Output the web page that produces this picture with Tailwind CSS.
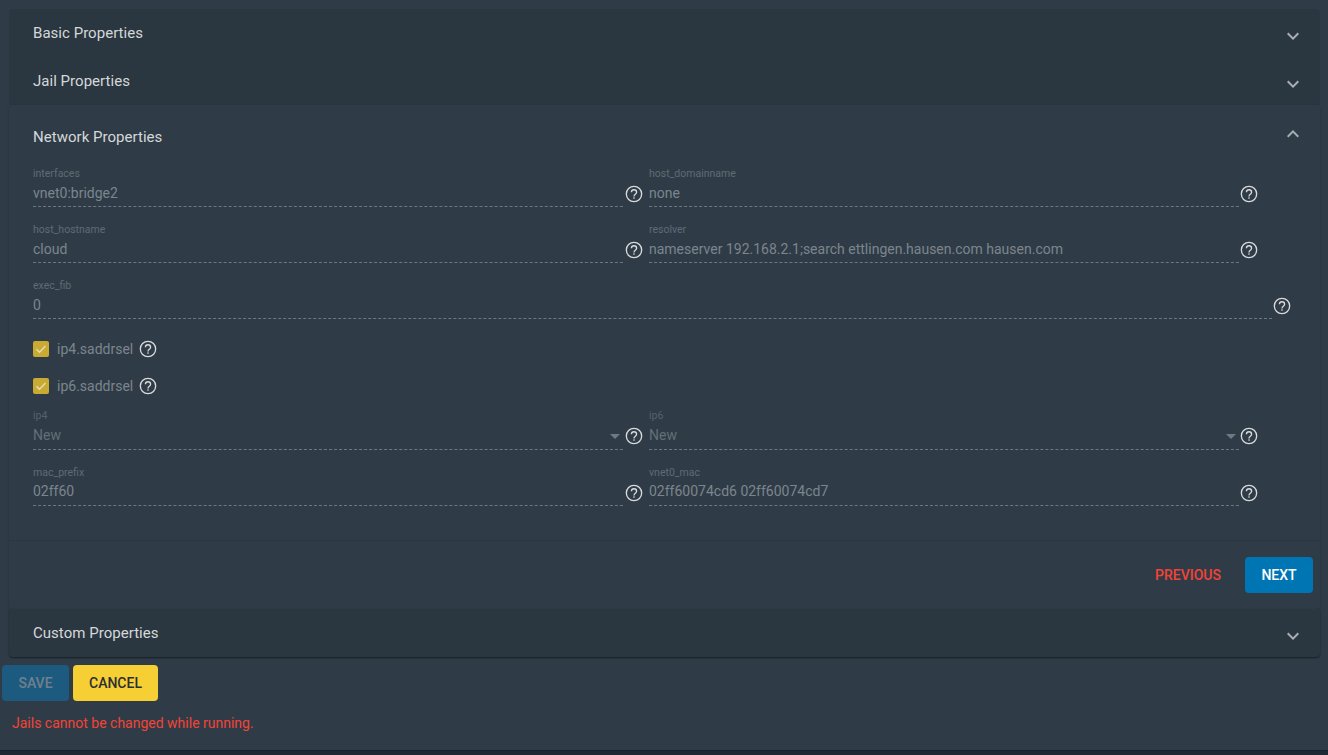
<!DOCTYPE html>
<html lang="en">
<head>
    <meta charset="utf8" />
    <script src="https://cdn.jsdelivr.net/npm/@tailwindcss/browser@4"></script>
    <title>Jail Properties</title>
</head>
<body class="bg-[#2f3c47] font-[Roboto,sans-serif] h-[755px] overflow-hidden relative">
    <svg class="hidden">
        <symbol id="help" viewBox="0 0 24 24">
            <circle cx="12" cy="12" r="9.2" fill="none" stroke="#d8dadc" stroke-width="1.6" />
            <path d="M8.9 10a3.1 3.1 0 0 1 6.2 0c0 2.4-3.1 2.3-3.1 5" fill="none" stroke="#d8dadc" stroke-width="1.6" />
            <rect x="11.2" y="16" width="1.6" height="1.7" fill="#d8dadc" />
        </symbol>
        <symbol id="down" viewBox="0 0 24 24"><path d="M16.59 8.59L12 13.17 7.41 8.59 6 10l6 6 6-6z"/></symbol>
        <symbol id="up" viewBox="0 0 24 24"><path d="M12 8l-6 6 1.41 1.41L12 10.83l4.59 4.58L18 14z"/></symbol>
    </svg>

    <main class="pt-[9px] pl-[9px] w-[1320px]">
        <!-- Collapsed panels -->
        <div class="bg-[#2b3740] rounded-t-[4px] h-[48px] flex items-center justify-between pl-6 pr-[15px]">
            <h2 class="text-[15px] tracking-[0.03px] text-[#d5d8da]">Basic Properties</h2>
            <svg class="w-6 h-6 fill-[#a9aeb2] mt-[6px]"><use href="#down" /></svg>
        </div>
        <div class="bg-[#2b3740] h-[48px] flex items-center justify-between pl-6 pr-[15px]">
            <h2 class="text-[15px] tracking-[0.03px] text-[#d5d8da]">Jail Properties</h2>
            <svg class="w-6 h-6 fill-[#a9aeb2] mt-[6px]"><use href="#down" /></svg>
        </div>

        <!-- Network panel -->
        <section class="bg-[#2f3c47] rounded-[4px] shadow-[0_1px_3px_rgba(0,0,0,0.2)]">
            <div class="h-[61px] flex items-center justify-between pl-6 pr-[15px]">
                <h2 class="text-[15px] tracking-[0.03px] text-[#d5d8da] mt-[3px]">Network Properties</h2>
                <svg class="w-6 h-6 fill-[#a9aeb2] -mt-[3px]"><use href="#up" /></svg>
            </div>

            <div class="pl-6">
                <div class="flex h-[56px]">
                    <div class="w-[590px] h-[41px] border-b border-dashed border-[#6e7780]">
                        <div class="text-[10.5px] leading-[16px] text-[#5f6b75]">interfaces</div>
                        <div class="text-[14px] leading-[20px] mt-[1px] text-[#7c858d]">vnet0:bridge2</div>
                    </div>
                    <svg class="w-5 h-5 ml-[1px] mt-[18px]"><use href="#help" /></svg>
                    <div class="w-[590px] h-[41px] ml-[5px] border-b border-dashed border-[#6e7780]">
                        <div class="text-[10.5px] leading-[16px] text-[#5f6b75]">host_domainname</div>
                        <div class="text-[14px] leading-[20px] mt-[1px] text-[#7c858d]">none</div>
                    </div>
                    <svg class="w-5 h-5 mt-[18px]"><use href="#help" /></svg>
                </div>
                <div class="flex h-[56px]">
                    <div class="w-[590px] h-[41px] border-b border-dashed border-[#6e7780]">
                        <div class="text-[10.5px] leading-[16px] text-[#5f6b75]">host_hostname</div>
                        <div class="text-[14px] leading-[20px] mt-[1px] text-[#7c858d]">cloud</div>
                    </div>
                    <svg class="w-5 h-5 ml-[1px] mt-[18px]"><use href="#help" /></svg>
                    <div class="w-[590px] h-[41px] ml-[5px] border-b border-dashed border-[#6e7780]">
                        <div class="text-[10.5px] leading-[16px] text-[#5f6b75]">resolver</div>
                        <div class="text-[14px] leading-[20px] mt-[1px] text-[#7c858d]">nameserver 192.168.2.1;search ettlingen.hausen.com hausen.com</div>
                    </div>
                    <svg class="w-5 h-5 mt-[18px]"><use href="#help" /></svg>
                </div>
                <div class="flex h-[56px]">
                    <div class="w-[1239px] h-[41px] border-b border-dashed border-[#6e7780]">
                        <div class="text-[10.5px] leading-[16px] text-[#5f6b75]">exec_fib</div>
                        <div class="text-[14px] leading-[20px] mt-[1px] text-[#7c858d]">0</div>
                    </div>
                    <svg class="w-5 h-5 mt-[18px]"><use href="#help" /></svg>
                </div>

                <!-- Checkboxes -->
                <label class="flex items-center h-[30px]">
                    <span class="w-4 h-4 rounded-[2px] bg-[#c9ab34] flex items-center justify-center">
                        <svg class="w-[14px] h-[14px] stroke-[#e6dfb8] fill-none" viewBox="0 0 14 14" stroke-width="1.3"><path d="M2.5 7.2l3 3 6-6.2" /></svg>
                    </span>
                    <span class="ml-2 text-[14px] text-[#7c858d]">ip4.saddrsel</span>
                    <svg class="w-5 h-5 ml-[5px]"><use href="#help" /></svg>
                </label>
                <label class="flex items-center h-[30px] mt-[7px]">
                    <span class="w-4 h-4 rounded-[2px] bg-[#c9ab34] flex items-center justify-center">
                        <svg class="w-[14px] h-[14px] stroke-[#e6dfb8] fill-none" viewBox="0 0 14 14" stroke-width="1.3"><path d="M2.5 7.2l3 3 6-6.2" /></svg>
                    </span>
                    <span class="ml-2 text-[14px] text-[#7c858d]">ip6.saddrsel</span>
                    <svg class="w-5 h-5 ml-[5px]"><use href="#help" /></svg>
                </label>

                <div class="flex h-[57px] mt-[7px]">
                    <div class="relative w-[590px] h-[42px] border-b border-dashed border-[#6e7780]">
                        <div class="text-[10.5px] leading-[16px] text-[#56616b]">ip4</div>
                        <div class="text-[14px] leading-[20px] mt-[1px] text-[#646e77]">New</div>
                        <span class="absolute right-[3px] top-[26px] w-0 h-0 border-x-[5px] border-x-transparent border-t-[5px] border-t-[#6f7982]"></span>
                    </div>
                    <svg class="w-5 h-5 ml-[1px] mt-[18px]"><use href="#help" /></svg>
                    <div class="relative w-[590px] h-[42px] ml-[5px] border-b border-dashed border-[#6e7780]">
                        <div class="text-[10.5px] leading-[16px] text-[#56616b]">ip6</div>
                        <div class="text-[14px] leading-[20px] mt-[1px] text-[#646e77]">New</div>
                        <span class="absolute right-[3px] top-[26px] w-0 h-0 border-x-[5px] border-x-transparent border-t-[5px] border-t-[#6f7982]"></span>
                    </div>
                    <svg class="w-5 h-5 mt-[18px]"><use href="#help" /></svg>
                </div>
                <div class="flex h-[56px]">
                    <div class="w-[590px] h-[41px] border-b border-dashed border-[#6e7780]">
                        <div class="text-[10.5px] leading-[16px] text-[#5f6b75]">mac_prefix</div>
                        <div class="text-[14px] leading-[20px] text-[#7c858d]">02ff60</div>
                    </div>
                    <svg class="w-5 h-5 ml-[1px] mt-[18px]"><use href="#help" /></svg>
                    <div class="w-[590px] h-[41px] ml-[5px] border-b border-dashed border-[#6e7780]">
                        <div class="text-[10.5px] leading-[16px] text-[#5f6b75]">vnet0_mac</div>
                        <div class="text-[14px] leading-[20px] text-[#7c858d]">02ff60074cd6 02ff60074cd7</div>
                    </div>
                    <svg class="w-5 h-5 mt-[18px]"><use href="#help" /></svg>
                </div>
            </div>

            <!-- Step actions -->
            <div class="mt-[19px] h-[69px] pb-[1px] border-t border-[#2b3640] flex items-center justify-end pr-[7px] gap-2">
                <button class="px-4 pt-[2px] h-9 text-[14px] font-medium text-[#f44336]">PREVIOUS</button>
                <button class="w-[68px] pt-[2px] h-9 rounded-[4px] bg-[#0075b4] text-[14px] font-medium text-white">NEXT</button>
            </div>
        </section>

        <div class="bg-[#2b3740] rounded-b-[4px] h-[48px] flex items-center justify-between pl-6 pr-[15px] shadow-[0_1px_2px_rgba(0,0,0,0.5)]">
            <h2 class="text-[15px] tracking-[0.03px] text-[#d5d8da]">Custom Properties</h2>
            <svg class="w-6 h-6 fill-[#a9aeb2] mt-[6px]"><use href="#down" /></svg>
        </div>
    </main>

    <div class="flex gap-1 pl-[2px] mt-2">
        <button class="w-[67px] h-9 rounded-[4px] bg-[#1c5a80] text-[14px] font-medium text-[#71808c]">SAVE</button>
        <button class="w-[85px] h-9 rounded-[4px] bg-[#f5cf33] text-[14px] font-medium text-[#2b2f33]">CANCEL</button>
    </div>
    <p class="pl-3 mt-[12px] text-[14px] leading-[20px] text-[#f44336]">Jails cannot be changed while running.</p>

    <div class="absolute left-0 right-0 bottom-0 h-[5px] bg-[#1f2a35] border-t border-[#1a232c]"></div>
</body>
</html>
